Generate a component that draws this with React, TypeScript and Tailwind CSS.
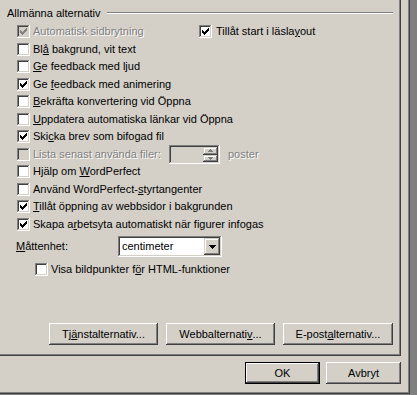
import React from "react";

const sunken =
  "shadow-[inset_-1px_-1px_0_#ffffff,inset_1px_1px_0_#808080,inset_-2px_-2px_0_#d4d0c8,inset_2px_2px_0_#404040]";
const raisedBtn =
  "shadow-[inset_-1px_-1px_0_#404040,inset_1px_1px_0_#ffffff,inset_-2px_-2px_0_#808080]";
const raisedSmall =
  "shadow-[inset_-1px_-1px_0_#404040,inset_1px_1px_0_#d4d0c8,inset_-2px_-2px_0_#808080,inset_2px_2px_0_#ffffff]";
const disabledText = "text-[#808080] [text-shadow:1px_1px_0_#ffffff]";

function CheckMark({ color }: { color: string }) {
  const tops = [2, 3, 4, 3, 2, 1, 0];
  return (
    <svg width="7" height="7" viewBox="0 0 7 7" shapeRendering="crispEdges">
      {tops.map((t, x) => (
        <rect key={x} x={x} y={t} width="1" height="3" fill={color} />
      ))}
    </svg>
  );
}

function Box({ checked, disabled }: { checked?: boolean; disabled?: boolean }) {
  return (
    <span
      className={`flex items-center justify-center w-[13px] h-[13px] shrink-0 ${
        disabled ? "bg-[#d4d0c8]" : "bg-white"
      } ${sunken}`}
    >
      {checked && <CheckMark color={disabled ? "#808080" : "#000000"} />}
    </span>
  );
}

function Tri({ dir, w, color }: { dir: "up" | "down"; w: number; color: string }) {
  const h = Math.ceil(w / 2);
  const rows = Array.from({ length: h }, (_, i) => {
    const width = dir === "down" ? w - 2 * i : 1 + 2 * i;
    return <rect key={i} x={(w - width) / 2} y={i} width={width} height="1" fill={color} />;
  });
  return (
    <svg width={w} height={h} viewBox={`0 0 ${w} ${h}`} shapeRendering="crispEdges">
      {rows}
    </svg>
  );
}

function Row({
  children,
  checked,
  disabled,
}: {
  children: React.ReactNode;
  checked?: boolean;
  disabled?: boolean;
}) {
  return (
    <div className="flex items-center h-[17.5px]">
      <Box checked={checked} disabled={disabled} />
      <span className={`ml-[3px] whitespace-nowrap ${disabled ? disabledText : ""}`}>{children}</span>
    </div>
  );
}

function Button({
  children,
  w,
  def,
}: {
  children: React.ReactNode;
  w: string;
  def?: boolean;
}) {
  return (
    <div
      className={`${w} h-[22px] flex items-center justify-center whitespace-nowrap bg-[#d4d0c8] ${raisedBtn} ${
        def ? "border border-black" : ""
      }`}
    >
      {children}
    </div>
  );
}

export default function App() {
  return (
    <div className="w-[417px] h-[395px] bg-[#808080] flex items-start overflow-hidden font-['Liberation_Sans',Arial,sans-serif] text-[11px] leading-[13px] text-black">
      <div className="w-[410px] h-[394px] bg-[#d4d0c8] shadow-[inset_-1px_-1px_0_#404040,inset_-2px_-2px_0_#808080] flex flex-col">
        {/* tab page */}
        <div className="w-[401px] h-[356px] shrink-0 flex flex-col shadow-[inset_-1px_-1px_0_#404040,inset_-2px_-2px_0_#808080]">
          <div className="flex items-center h-[14px] mt-[6px] pl-[7px] pr-[8px]">
            <span className="whitespace-nowrap">Allmänna alternativ</span>
            <div className="flex-1 ml-[6px] h-[2px] border-t border-t-[#808080] border-b border-b-white" />
          </div>

          <div className="mt-[3px] pl-[17px] flex flex-col">
            <div className="flex items-center h-[17.5px]">
              <div className="w-[182px] flex items-center">
                <Box checked disabled />
                <span className={`ml-[3px] whitespace-nowrap ${disabledText}`}>Automatisk sidbrytning</span>
              </div>
              <Box checked />
              <span className="ml-[4px] whitespace-nowrap">
                Tillåt start i läsla<u>y</u>out
              </span>
            </div>
            <Row>
              Bl<u>å</u> bakgrund, vit text
            </Row>
            <Row>
              <u>G</u>e feedback med ljud
            </Row>
            <Row checked>
              Ge <u>f</u>eedback med animering
            </Row>
            <Row>
              <u>B</u>ekräfta konvertering vid Öppna
            </Row>
            <Row>
              <u>U</u>ppdatera automatiska länkar vid Öppna
            </Row>
            <Row checked>
              Ski<u>c</u>ka brev som bifogad fil
            </Row>
            <div className="flex items-center h-[17.5px]">
              <Box disabled />
              <span className={`ml-[3px] w-[136px] whitespace-nowrap ${disabledText}`}>
                Lista senast använda filer:
              </span>
              <div className={`w-[51px] h-[19px] shrink-0 bg-[#d4d0c8] p-[2px] flex justify-end ${sunken}`}>
                <div className="w-[15px] flex flex-col">
                  <div className={`h-[8px] flex items-center justify-center ${raisedSmall}`}>
                    <Tri dir="up" w={5} color="#808080" />
                  </div>
                  <div className={`h-[7px] flex items-center justify-center ${raisedSmall}`}>
                    <Tri dir="down" w={5} color="#808080" />
                  </div>
                </div>
              </div>
              <span className={`ml-[8px] ${disabledText}`}>poster</span>
            </div>
            <Row>
              Hjälp om <u>W</u>ordPerfect
            </Row>
            <Row>
              Använd WordPerfect-<u>s</u>tyrtangenter
            </Row>
            <Row checked>
              <u>T</u>illåt öppning av webbsidor i bakgrunden
            </Row>
            <Row checked>
              Skapa a<u>r</u>betsyta automatiskt när figurer infogas
            </Row>
          </div>

          <div className="mt-[3px] h-[21px] pl-[16px] flex items-center">
            <span className="w-[102px] whitespace-nowrap">
              <u>M</u>åttenhet:
            </span>
            <div className={`w-[104px] h-[21px] bg-white p-[2px] flex ${sunken}`}>
              <span className="flex-1 pl-[2px] leading-[17px] whitespace-nowrap">centimeter</span>
              <div className={`w-[16px] h-[17px] bg-[#d4d0c8] flex items-center justify-center ${raisedSmall}`}>
                <Tri dir="down" w={7} color="#000000" />
              </div>
            </div>
          </div>

          <div className="mt-[4px] pl-[35px]">
            <Row>
              Visa bildpunkter f<u>ö</u>r HTML-funktioner
            </Row>
          </div>

          <div className="mt-auto mb-[11px] pr-[8px] flex justify-end gap-[8px]">
            <Button w="w-[109px]">
              Tj<u>ä</u>nstalternativ...
            </Button>
            <Button w="w-[109px]">
              Webbalternati<u>v</u>...
            </Button>
            <Button w="w-[110px]">
              E-post<u>a</u>lternativ...
            </Button>
          </div>
        </div>

        <div className="mt-[6px] pr-[9px] flex justify-end gap-[6px]">
          <Button w="w-[75px]" def>
            OK
          </Button>
          <Button w="w-[75px]">Avbryt</Button>
        </div>
      </div>
    </div>
  );
}
